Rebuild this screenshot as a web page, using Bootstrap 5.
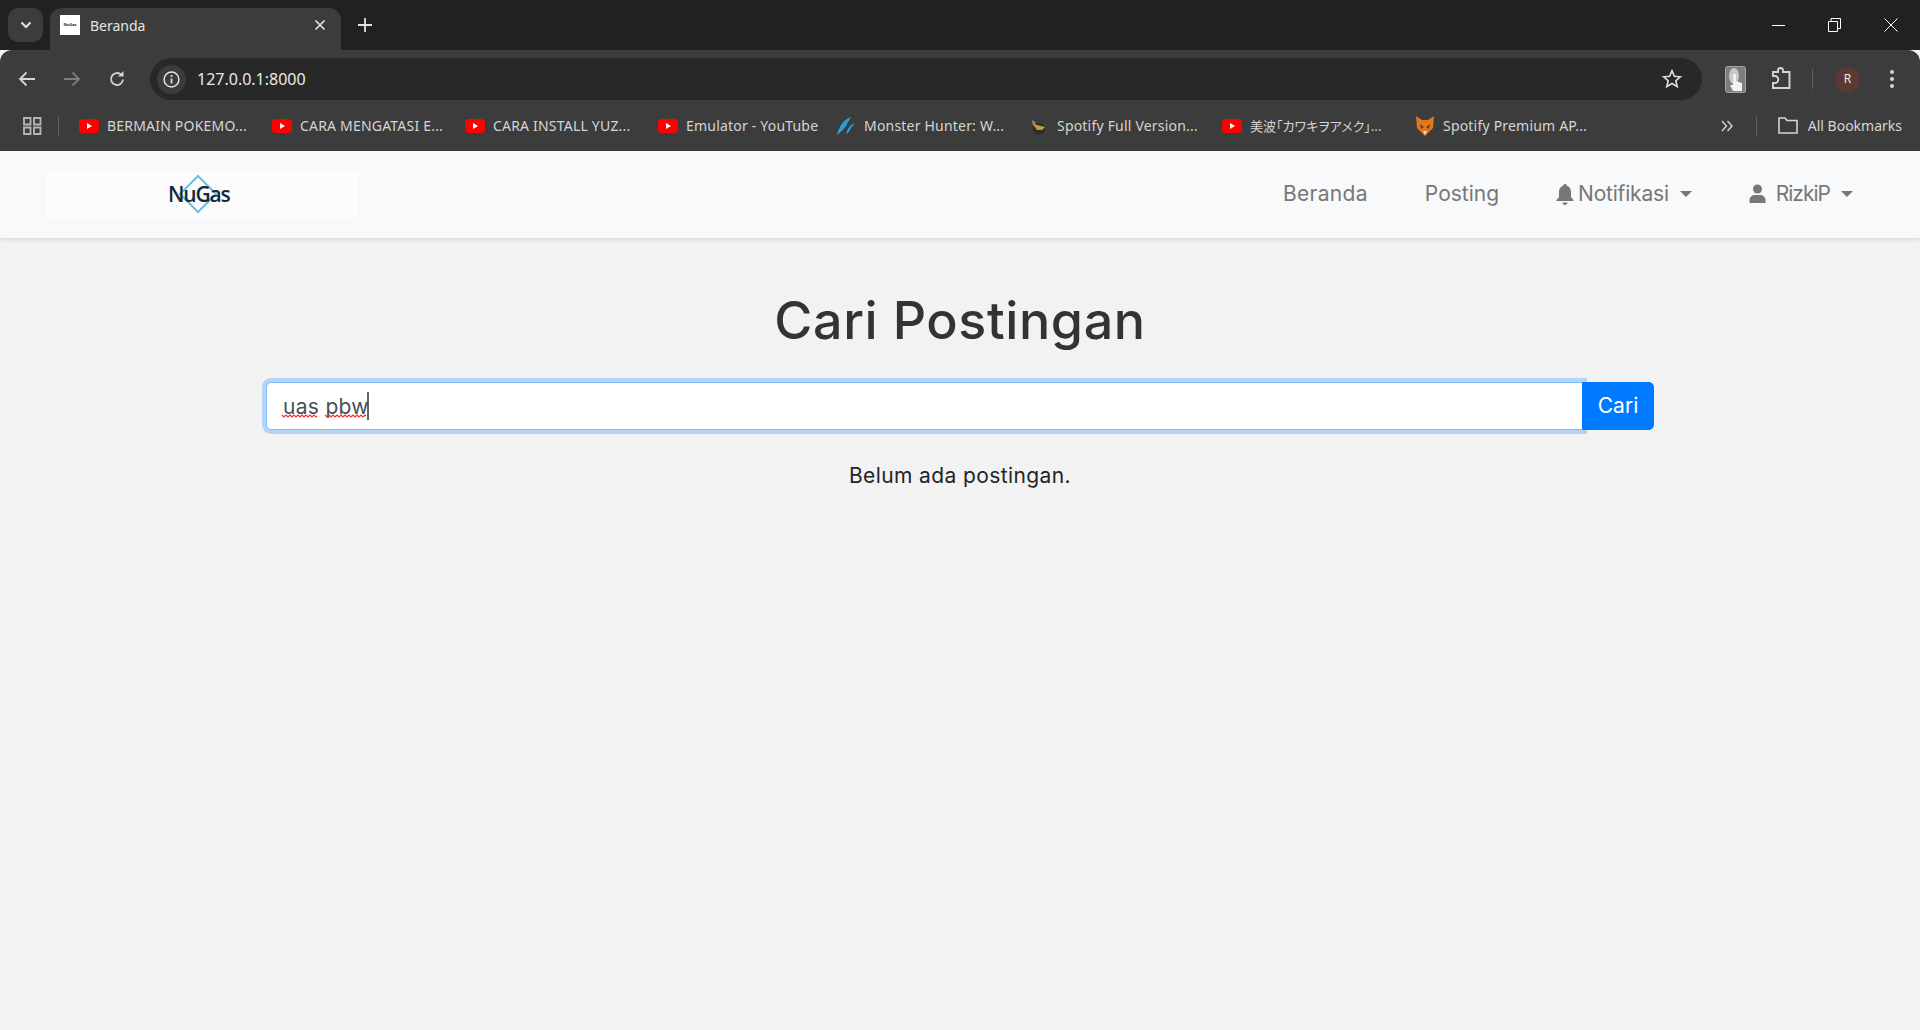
<!DOCTYPE html>
<html lang="en">
<head>
    <meta charset="UTF-8">
    <meta name="viewport" content="width=device-width, initial-scale=1.0">
    <title>Beranda</title>
    <link href="https://cdn.jsdelivr.net/npm/bootstrap@5.3.0/dist/css/bootstrap.min.css" rel="stylesheet">
    <style>
        html, body { height: 100%; }
        body { background: #f2f2f2; font-family: Inter, "Noto Sans", sans-serif; color: #212529; overflow: hidden; }
        svg { display: block; flex: none; }

        /* browser frame */
        .tab-strip { height: 50px; background: #202221; padding: 8px 0 0 8px; font-family: "Noto Sans", "Liberation Sans", sans-serif; }
        .tab-menu { width: 35px; height: 34px; background: #3c3c3c; border-radius: 10px; margin-right: 7px; }
        .tab-item { width: 291px; height: 42px; background: #3c3c3c; border-radius: 12px 12px 0 0; padding: 0 15px 8px 10px; color: #e3e3e3; font-size: 14px; }
        .tab-favicon { width: 20px; height: 20px; background: #fff; color: #14293a; font-size: 4px; font-weight: 700; margin-right: 10px; }
        .tab-new { margin: 0 0 8px 17px; }
        .win-controls { margin-right: 22px; gap: 43px; padding-bottom: 8px; }
        .toolbar { height: 58px; background: #3c3c3c; border-radius: 12px 12px 0 0; padding: 0 25px 0 18px; }
        .nav-icons { gap: 27px; margin-right: 24px; }
        .omnibox { width: 1553px; height: 42px; background: #282828; border-radius: 21px; padding: 0 20px 0 7px; color: #e8e8e8; font-family: "Noto Sans", "Liberation Sans", sans-serif; font-size: 16px; }
        .info-chip { width: 29px; height: 29px; background: #3c3c3c; border-radius: 50%; margin-right: 11px; }
        .tool-right { margin-left: 23px; }
        .tool-puzzle { margin-left: 25px; }
        .tool-right .tool-sep { margin-left: 21px; }
        .tool-right .avatar-chip { margin-left: 22px; }
        .tool-kebab { margin-left: 29px; }
        .tool-sep { width: 1px; height: 20px; background: #5f5f5f; }
        .avatar-chip { width: 25px; height: 25px; background: #5b3a32; border-radius: 50%; color: #e8e8e8; font-size: 12px; font-family: "Noto Sans", sans-serif; }
        .bookmarks { height: 43px; background: #3c3c3c; padding: 0 18px 8px 23px; color: #d5d5d5; font-family: "Noto Sans", "Liberation Sans", "Noto Sans CJK JP", sans-serif; font-size: 14px; letter-spacing: .2px; white-space: nowrap; }
        .bookmark-item { width: 193px; gap: 8px; }
        .bookmark-item.short-item { width: 178px; }
        .bookmark-list { margin-left: 20px; }
        .jp-title { font-family: "Noto Sans CJK JP", sans-serif; font-size: 13px; letter-spacing: 0; font-feature-settings: "palt"; }
        .marks-sep { margin: 0 21px 0 23px; }
        .marks-all { margin-left: 10px; letter-spacing: 0; }

        /* site navbar */
        .site-nav { height: 87px; background: #f8f9fa; box-shadow: 0 2px 4px rgba(0, 0, 0, .1); padding: 0 67px 0 46px; font-size: 21px; letter-spacing: .3px; }
        .logo-box { width: 312px; height: 47px; background: #fcfcfc; }
        .logo-mark { position: relative; width: 60px; height: 40px; margin: 0 8px 2px 0; }
        .logo-mark svg { position: absolute; left: 10px; top: 0; }
        .logo-word { position: relative; font-family: "Open Sans", sans-serif; font-weight: 600; font-size: 21px; line-height: 40px; letter-spacing: -1.2px; color: #14293a; text-align: center; }
        .site-link { color: #777; text-decoration: none; padding: 0; }
        .site-link.dropdown-toggle::after { margin-left: 11px; vertical-align: .18em; border-top-width: .3em; border-left-width: .3em; border-right-width: .3em; }
        .site-links { gap: 57px; padding-bottom: 2px; }
        .link-posting { letter-spacing: 0; }
        .link-notif { letter-spacing: -.2px; }
        .link-user { letter-spacing: -1px; }
        .user-icon { margin-right: 10px; }

        /* search */
        .page-main { width: 1388px; margin: 0 auto; padding-top: 53px; }
        .page-title { font-size: 52px; font-weight: 550; letter-spacing: .6px; color: #333; line-height: 60px; margin-bottom: 31px; }
        .search-wrap { position: relative; }
        .search-wrap .form-control { height: 48px; min-height: 48px; padding-top: 0; padding-bottom: 0; font-family: inherit; font-size: 21px; letter-spacing: .3px; color: #495057; border-color: #80bdff; box-shadow: 0 0 0 4px rgba(0, 123, 255, .25); border-radius: 5px 0 0 5px; z-index: 3; }
        .search-wrap .btn { background: #007bff; border-color: #007bff; border-radius: 0 5px 5px 0; width: 72px; padding: 0; font-size: 21px; margin-left: -1px; position: relative; z-index: 5; }
        .spell-marks { position: absolute; left: 0; top: 0; z-index: 6; pointer-events: none; }
        .empty-note { font-size: 21px; letter-spacing: .4px; margin-top: 30px; }
    </style>
</head>
<body>
    <div class="tab-strip d-flex align-items-start">
        <div class="tab-menu d-flex align-items-center justify-content-center">
            <svg width="12" height="8" viewBox="0 0 12 8"><path d="M1.500 1.500 6 6l4.500-4.500" fill="none" stroke="#e3e3e3" stroke-width="2"/></svg>
        </div>
        <div class="tab-item d-flex align-items-center">
            <div class="tab-favicon d-flex align-items-center justify-content-center">NuGas</div>
            <span class="flex-grow-1">Beranda</span>
            <svg width="12" height="12" viewBox="0 0 12 12"><path d="M1.500 1.500l9 9M10.500 1.500l-9 9" stroke="#e3e3e3" stroke-width="1.700"/></svg>
        </div>
        <div class="tab-new align-self-center">
            <svg width="14" height="14" viewBox="0 0 14 14"><path d="M7 0v14M0 7h14" stroke="#e3e3e3" stroke-width="1.800"/></svg>
        </div>
        <div class="win-controls d-flex align-items-center align-self-center ms-auto">
            <svg width="13" height="13" viewBox="0 0 13 13"><path d="M0 6.500h13" stroke="#fff"/></svg>
            <svg width="13" height="14" viewBox="0 0 13 14"><path d="M.5 3.500h9v10h-9zM3 3.500v-3h9.500v10H9.500" fill="none" stroke="#fff"/></svg>
            <svg width="14" height="14" viewBox="0 0 14 14"><path d="M.5.500l13 13M13.500.500l-13 13" stroke="#fff"/></svg>
        </div>
    </div>

    <div class="toolbar d-flex align-items-center">
        <div class="nav-icons d-flex align-items-center">
            <svg width="18" height="16" viewBox="0 0 18 16"><path d="M17 8H2M8.500 1.500 2 8l6.500 6.500" fill="none" stroke="#d5d5d5" stroke-width="1.800"/></svg>
            <svg width="18" height="16" viewBox="0 0 18 16"><path d="M1 8h15M9.500 1.500 16 8l-6.500 6.500" fill="none" stroke="#7d7d7d" stroke-width="1.800"/></svg>
            <svg width="18" height="18" viewBox="0 0 18 18"><path d="M15 9.500A6 6 0 1 1 13.200 4.700" fill="none" stroke="#d5d5d5" stroke-width="1.800"/><path d="M15.500 1v5.500H10z" fill="#d5d5d5"/></svg>
        </div>
        <div class="omnibox d-flex align-items-center">
            <div class="info-chip d-flex align-items-center justify-content-center">
                <svg width="17" height="17" viewBox="0 0 17 17"><circle cx="8.500" cy="8.500" r="7.400" fill="none" stroke="#e3e3e3" stroke-width="1.500"/><path d="M8.500 7.500v5" stroke="#e3e3e3" stroke-width="1.700"/><circle cx="8.500" cy="5" r="1.100" fill="#e3e3e3"/></svg>
            </div>
            <span class="flex-grow-1">127.0.0.1:8000</span>
            <svg width="20" height="20" viewBox="0 0 20 20"><path d="M10 1.800l2.400 5.500 6 .5-4.600 3.900 1.400 5.900-5.200-3.100-5.200 3.100 1.400-5.900L1.600 7.800l6-.5z" fill="none" stroke="#e3e3e3" stroke-width="1.600"/></svg>
        </div>
        <div class="tool-right d-flex align-items-center">
            <svg width="21" height="27" viewBox="0 0 21 27"><rect x=".5" y=".5" width="20" height="26" rx="2" fill="#7d7d7d" stroke="#a5a5a5"/><ellipse cx="9" cy="10" rx="5" ry="8" fill="#c9c9c9"/><path d="M8 8h3v7l6 2v8H8l-3-6h3z" fill="#eef3f8"/></svg>
            <svg class="tool-puzzle" width="20" height="24" viewBox="0 0 20 24"><path d="M2 5h5V3.500a2.500 2.500 0 0 1 5 0V5h6.500v16H2v-5h1.800a3.500 3.500 0 0 0 0-7H2z" fill="none" stroke="#d5d5d5" stroke-width="1.900"/></svg>
            <div class="tool-sep"></div>
            <div class="avatar-chip d-flex align-items-center justify-content-center">R</div>
            <svg class="tool-kebab" width="6" height="20" viewBox="0 0 6 20"><circle cx="3" cy="3" r="2" fill="#d5d5d5"/><circle cx="3" cy="10" r="2" fill="#d5d5d5"/><circle cx="3" cy="17" r="2" fill="#d5d5d5"/></svg>
        </div>
    </div>

    <div class="bookmarks d-flex align-items-center">
        <svg width="19" height="18" viewBox="0 0 19 18"><path d="M1 1h6.500v6.500H1zM11 1h6.500v6.500H11zM1 10.500h6.500V17H1zM11 10.500h6.500V17H11z" fill="none" stroke="#b5b5b5" stroke-width="1.800"/></svg>
        <div class="tool-sep ms-3"></div>
        <div class="bookmark-list d-flex align-items-center">
            <div class="bookmark-item d-flex align-items-center"><svg width="20" height="14" viewBox="0 0 20 14"><rect width="20" height="14" rx="4" fill="#f00"/><path d="M8 4l5 3-5 3z" fill="#fff"/></svg><span>BERMAIN POKEMO...</span></div>
            <div class="bookmark-item d-flex align-items-center"><svg width="20" height="14" viewBox="0 0 20 14"><rect width="20" height="14" rx="4" fill="#f00"/><path d="M8 4l5 3-5 3z" fill="#fff"/></svg><span>CARA MENGATASI E...</span></div>
            <div class="bookmark-item d-flex align-items-center"><svg width="20" height="14" viewBox="0 0 20 14"><rect width="20" height="14" rx="4" fill="#f00"/><path d="M8 4l5 3-5 3z" fill="#fff"/></svg><span>CARA INSTALL YUZ...</span></div>
            <div class="bookmark-item short-item d-flex align-items-center"><svg width="20" height="14" viewBox="0 0 20 14"><rect width="20" height="14" rx="4" fill="#f00"/><path d="M8 4l5 3-5 3z" fill="#fff"/></svg><span>Emulator - YouTube</span></div>
            <div class="bookmark-item d-flex align-items-center"><svg width="20" height="20" viewBox="0 0 20 20"><path d="M1 19C3 10 8 3 15 1c-2 4-4 6-5 9-2 3-5 6-9 9zM10 18c1-5 4-9 9-11-2 3-4 4-5 7-1 2-2 3-4 4z" fill="#2a9fd6"/></svg><span>Monster Hunter: W...</span></div>
            <div class="bookmark-item d-flex align-items-center"><svg width="20" height="20" viewBox="0 0 20 20"><circle cx="10" cy="13" r="6" fill="#2d2d2d"/><path d="M3 7l5 2 8 2-3 3H8z" fill="#c79a3c"/><path d="M3 4l4 3-3 1z" fill="#9a9a9a"/></svg><span>Spotify Full Version...</span></div>
            <div class="bookmark-item d-flex align-items-center"><svg width="20" height="14" viewBox="0 0 20 14"><rect width="20" height="14" rx="4" fill="#f00"/><path d="M8 4l5 3-5 3z" fill="#fff"/></svg><span class="jp-title">美波「カワキヲアメク」...</span></div>
            <div class="bookmark-item d-flex align-items-center"><svg width="20" height="22" viewBox="0 0 20 22"><path d="M1 1l6 4h6l6-4-1 12-8 8-8-8z" fill="#e2761b"/><path d="M5 9l4 3-3 2zM15 9l-4 3 3 2z" fill="#763d16"/><path d="M8 16h4l-2 4z" fill="#e4e4e4"/></svg><span>Spotify Premium AP...</span></div>
        </div>
        <div class="d-flex align-items-center ms-auto">
            <svg width="12" height="12" viewBox="0 0 12 12"><path d="M1 1l4.500 5L1 11M6.500 1 11 6l-4.500 5" fill="none" stroke="#d5d5d5" stroke-width="1.400"/></svg>
            <div class="tool-sep marks-sep"></div>
            <svg width="20" height="17" viewBox="0 0 20 17"><path d="M1 1h6l2 2.500h10V16H1z" fill="none" stroke="#d5d5d5" stroke-width="1.600"/></svg>
            <span class="marks-all">All Bookmarks</span>
        </div>
    </div>

    <nav class="site-nav d-flex align-items-center justify-content-between">
        <div class="logo-box d-flex align-items-center justify-content-center">
            <div class="logo-mark">
                <svg width="40" height="40" viewBox="0 0 40 40"><path d="M20 2 38 20 20 38 2 20z" fill="none" stroke="#6bbfe0" stroke-width="2"/></svg>
                <div class="logo-word">NuGas</div>
            </div>
        </div>
        <div class="site-links d-flex align-items-center">
            <a class="site-link" href="#">Beranda</a>
            <a class="site-link link-posting" href="#">Posting</a>
            <a class="site-link link-notif dropdown-toggle d-flex align-items-center" href="#">
                <svg class="me-1" width="18" height="22" viewBox="0 0 18 22"><path d="M9 1c1 0 1.600.7 1.600 1.600C13.500 3.400 15 6 15 9v5l2.500 3v1H.5v-1L3 14V9c0-3 1.500-5.600 4.400-6.400C7.400 1.700 8 1 9 1zM6.500 19.500h5A2.500 2.500 0 0 1 6.500 19.500z" fill="#777"/></svg>
                Notifikasi
            </a>
            <a class="site-link link-user dropdown-toggle d-flex align-items-center" href="#">
                <svg class="user-icon" width="17" height="19" viewBox="0 0 17 19"><circle cx="8.500" cy="5" r="4.500" fill="#777"/><path d="M.5 19v-3c0-3 3-5 5-5h6c2 0 5 2 5 5v3z" fill="#777"/></svg>
                RizkiP
            </a>
        </div>
    </nav>

    <main class="page-main">
        <h1 class="page-title text-center">Cari Postingan</h1>
        <form class="search-wrap">
            <div class="input-group input-group-lg">
                <input class="form-control" type="text" value="uas pbw" aria-label="Cari">
                <button class="btn btn-primary" type="button">Cari</button>
            </div>
            <svg class="spell-marks" width="110" height="48" viewBox="0 0 110 48">
                <path d="M16 33l2 2 2-2 2 2 2-2 2 2 2-2 2 2 2-2 2 2 2-2 2 2 2-2 2 2 2-2 2 2 2-2 2 2 1-1" fill="none" stroke="#f52f2f" stroke-width="1.200"/>
                <path d="M59 33l2 2 2-2 2 2 2-2 2 2 2-2 2 2 2-2 2 2 2-2 2 2 2-2 2 2 2-2 2 2 2-2 2 2 2-2 2 2 2-2 1 1" fill="none" stroke="#f52f2f" stroke-width="1.200"/>
                <path d="M102 10v28" stroke="#333" stroke-width="1.500"/>
            </svg>
        </form>
        <p class="empty-note text-center">Belum ada postingan.</p>
    </main>
    <script src="https://cdn.jsdelivr.net/npm/bootstrap@5.3.0/dist/js/bootstrap.bundle.min.js"></script>
</body>
</html>
